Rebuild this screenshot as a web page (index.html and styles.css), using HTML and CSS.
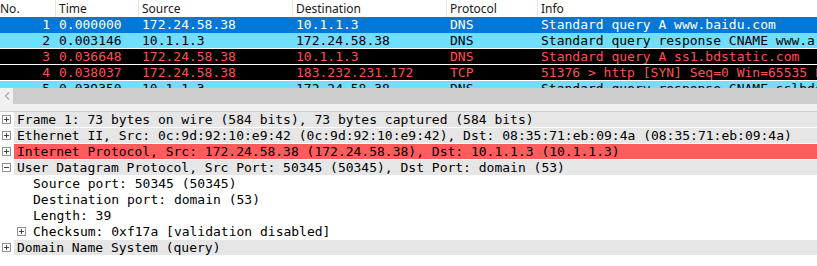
FILE: index.html
```html
<!DOCTYPE html>
<html lang="en">
<head>
    <meta charset="UTF-8">
    <title>Packet capture</title>
    <link rel="stylesheet" href="styles.css">
</head>
<body>
    <div class="packet-list">
        <div class="row header">
            <div class="cell no">No.</div>
            <div class="cell">Time</div>
            <div class="cell">Source</div>
            <div class="cell">Destination</div>
            <div class="cell">Protocol</div>
            <div class="cell">Info</div>
        </div>
        <div class="row selected">
            <div class="cell no">1</div>
            <div class="cell">0.000000</div>
            <div class="cell">172.24.58.38</div>
            <div class="cell">10.1.1.3</div>
            <div class="cell">DNS</div>
            <div class="cell">Standard query A www.baidu.com</div>
        </div>
        <div class="row dns">
            <div class="cell no">2</div>
            <div class="cell">0.003146</div>
            <div class="cell">10.1.1.3</div>
            <div class="cell">172.24.58.38</div>
            <div class="cell">DNS</div>
            <div class="cell">Standard query response CNAME www.a.shifen.com</div>
        </div>
        <div class="row bad">
            <div class="cell no">3</div>
            <div class="cell">0.036648</div>
            <div class="cell">172.24.58.38</div>
            <div class="cell">10.1.1.3</div>
            <div class="cell">DNS</div>
            <div class="cell">Standard query A ss1.bdstatic.com</div>
        </div>
        <div class="row bad">
            <div class="cell no">4</div>
            <div class="cell">0.038037</div>
            <div class="cell">172.24.58.38</div>
            <div class="cell">183.232.231.172</div>
            <div class="cell">TCP</div>
            <div class="cell">51376 &gt; http [SYN] Seq=0 Win=65535 Len=0</div>
        </div>
        <div class="row dns last">
            <div class="cell no">5</div>
            <div class="cell">0.039350</div>
            <div class="cell">10.1.1.3</div>
            <div class="cell">172.24.58.38</div>
            <div class="cell">DNS</div>
            <div class="cell">Standard query response CNAME sslbdstatic.jomodns.com</div>
        </div>
    </div>
    <div class="hscroll">
        <div class="arrow">
            <svg width="6" height="8" viewBox="0 0 6 8"><path d="M5 0.5 L1.5 4 L5 7.5" fill="none" stroke="#a8a8a8" stroke-width="1.2"/></svg>
        </div>
        <div class="thumb"></div>
    </div>
    <div class="splitter"></div>
    <div class="tree">
        <div class="node top"><span class="box plus"></span><span class="label">Frame 1: 73 bytes on wire (584 bits), 73 bytes captured (584 bits)</span></div>
        <div class="node top"><span class="box plus"></span><span class="label">Ethernet II, Src: 0c:9d:92:10:e9:42 (0c:9d:92:10:e9:42), Dst: 08:35:71:eb:09:4a (08:35:71:eb:09:4a)</span></div>
        <div class="node top error"><span class="box plus"></span><span class="label">Internet Protocol, Src: 172.24.58.38 (172.24.58.38), Dst: 10.1.1.3 (10.1.1.3)</span></div>
        <div class="node top"><span class="box minus"></span><span class="label">User Datagram Protocol, Src Port: 50345 (50345), Dst Port: domain (53)</span></div>
        <div class="node child"><span class="label">Source port: 50345 (50345)</span></div>
        <div class="node child"><span class="label">Destination port: domain (53)</span></div>
        <div class="node child"><span class="label">Length: 39</span></div>
        <div class="node child boxed"><span class="box plus"></span><span class="label">Checksum: 0xf17a [validation disabled]</span></div>
        <div class="node top"><span class="box plus"></span><span class="label">Domain Name System (query)</span></div>
    </div>
</body>
</html>
```

FILE: styles.css
```css
body {
    margin: 0;
    width: 817px;
    height: 266px;
    overflow: hidden;
    background-color: white;
    font-family: "DejaVu Sans Mono", monospace;
    font-size: 13px;
}
.packet-list {
    height: 88px;
    overflow: hidden;
}
.row {
    display: grid;
    grid-template-columns: 55px 83px 154px 154px 91px 1fr;
    height: 16px;
    line-height: 15px;
    white-space: nowrap;
    border-bottom: 1px solid white;
    box-sizing: border-box;
}
.cell {
    padding-left: 3px;
    overflow: hidden;
}
.cell.no {
    text-align: right;
    padding-left: 0;
    padding-right: 5px;
}
.header {
    height: 17px;
    line-height: 17px;
    border-bottom: none;
    font-family: "Noto Sans", sans-serif;
    font-size: 12px;
    color: #1a1a1a;
}
.header .cell + .cell {
    border-left: 1px solid #e5e5e5;
}
.header .cell.no {
    text-align: left;
}
.row .cell + .cell {
    margin-left: 0;
}
.row:not(.header) .cell + .cell {
    padding-left: 4px;
}
.selected {
    background-color: #0078d7;
    color: white;
    border-bottom: none;
}
.dns {
    background-color: #70deff;
    color: #000;
}
.bad {
    background-color: #000;
    color: #ff5050;
}
.hscroll {
    display: flex;
    height: 16px;
    background-color: #f0f0f0;
}
.arrow {
    width: 13px;
    display: flex;
    align-items: center;
    justify-content: center;
}
.thumb {
    flex: 1;
    background-color: #cdcdcd;
}
.splitter {
    height: 7px;
    background-color: #f0f0f0;
    border-bottom: 1px solid #cfcfcf;
}
.tree {
    padding-top: 0;
}
.node {
    display: flex;
    align-items: center;
    height: 16px;
    white-space: nowrap;
    color: #000;
    border-bottom: 1px solid white;
    box-sizing: border-box;
}
.node .label {
    line-height: 15px;
}
.node.top .label {
    flex: 1;
    background-color: #e6e6e6;
    padding-left: 3px;
    margin-left: 3px;
}
.node.error .label {
    background-color: #ff5c5c;
}
.node.child {
    padding-left: 33px;
}
.node.boxed {
    padding-left: 17px;
}
.node.boxed .label {
    padding-left: 7px;
}
.box {
    position: relative;
    display: inline-block;
    width: 9px;
    height: 9px;
    border: 1px solid #919191;
    box-sizing: border-box;
    background-color: white;
    flex: none;
}
.node.top .box {
    margin-left: 2px;
}
.box::before {
    content: "";
    position: absolute;
    left: 1px;
    top: 3px;
    width: 5px;
    height: 1px;
    background-color: #444;
}
.box.plus::after {
    content: "";
    position: absolute;
    left: 3px;
    top: 1px;
    width: 1px;
    height: 5px;
    background-color: #444;
}
```
